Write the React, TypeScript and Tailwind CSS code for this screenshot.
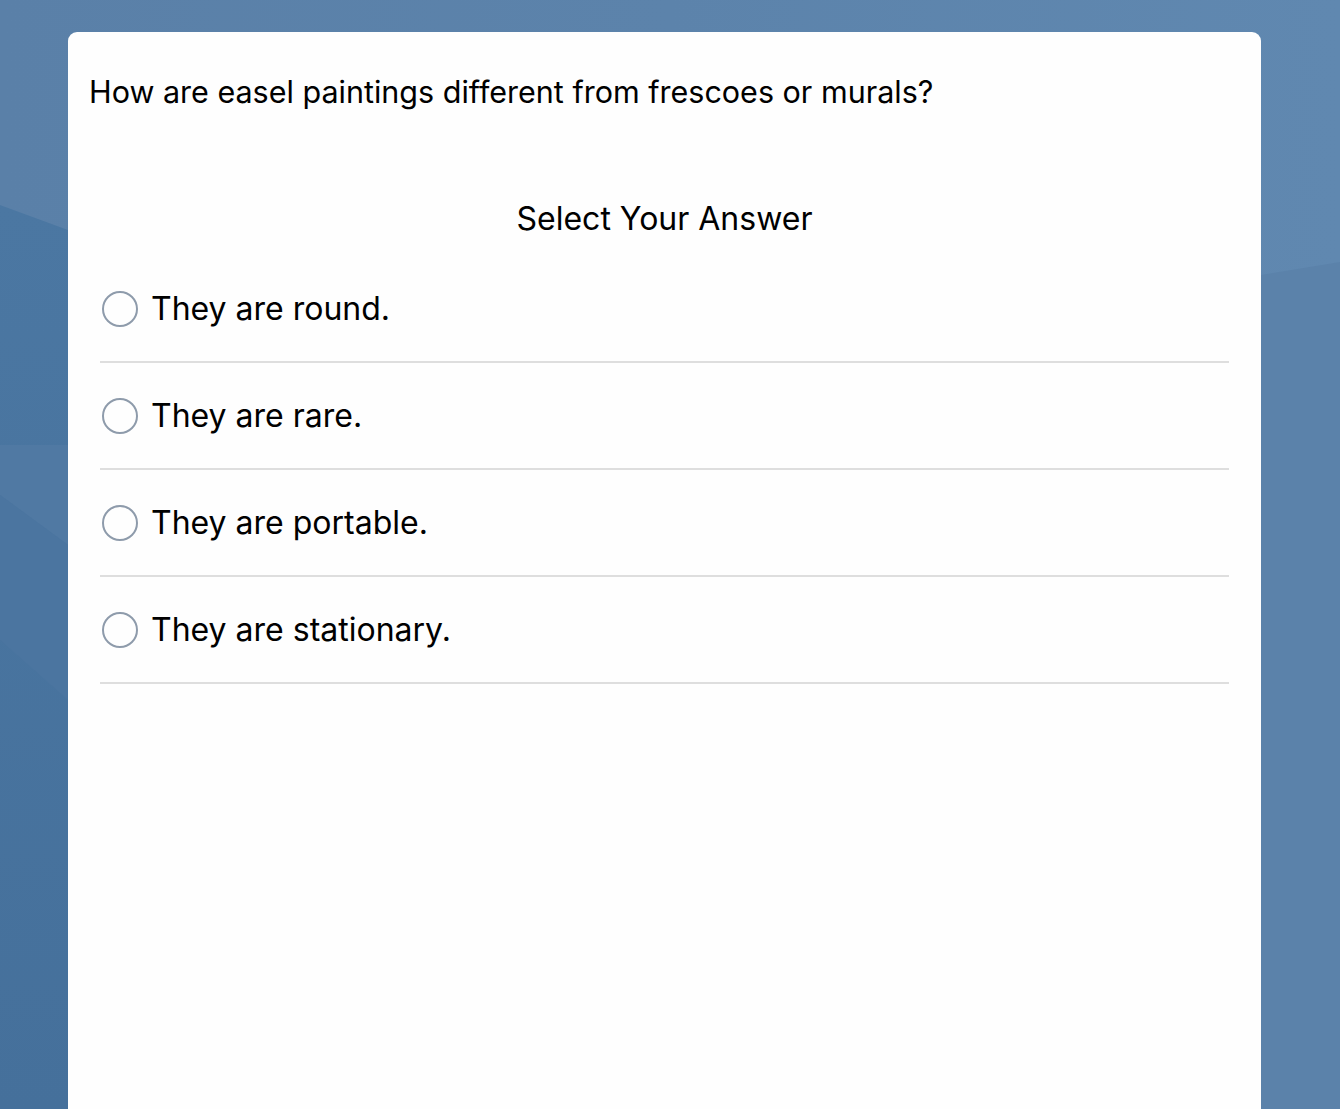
import React from "react";

const options = [
  "They are round.",
  "They are rare.",
  "They are portable.",
  "They are stationary.",
];

export default function App() {
  return (
    <div
      className="relative h-[1109px] w-full overflow-hidden bg-[linear-gradient(90deg,#5a80a8_0%,#5c83ab_50%,#6088b0_100%)]"
      style={{ fontFamily: "Inter, 'Noto Sans', sans-serif" }}
    >
      <svg className="absolute inset-0 h-full w-full" viewBox="0 0 1340 1109" preserveAspectRatio="none">
        <defs>
          <linearGradient id="lg" x1="0" y1="0" x2="0" y2="1">
            <stop offset="0" stopColor="#4b77a2" />
            <stop offset="1" stopColor="#45709b" />
          </linearGradient>
        </defs>
        <path d="M0 205 L68 230 L300 300 L300 1109 L0 1109 Z" fill="url(#lg)" />
        <path d="M0 445 L68 445 L68 545 L0 495 Z" fill="#5079a3" />
        <path d="M0 495 L68 545 L68 700 L0 640 Z" fill="#4b75a0" />
        <path d="M1200 280 L1261 275 L1340 262 L1340 1109 L1200 1109 Z" fill="#5b82aa" />
      </svg>
      <div className="relative pl-[68px] pt-[32px]">
        <div className="h-[1100px] w-[1193px] rounded-[9px] bg-[#fefefe]">
          <div className="pl-[21px] pt-[40px] text-[30.5px] leading-[40px] text-black">
            How are easel paintings different from frescoes or murals?
          </div>
          <div className="mt-[87px] text-center text-[32px] leading-[40px] text-black">
            Select Your Answer
          </div>
          <div className="mt-[17px] px-[32px]">
            {options.map((o) => (
              <div
                key={o}
                className="flex h-[107px] items-center border-b-2 border-[#dedede] pl-[2px]"
              >
                <div className="h-[36px] w-[36px] rounded-full border-2 border-[#8e9bab]" />
                <div className="ml-[13px] text-[32px] leading-[40px] text-black">{o}</div>
              </div>
            ))}
          </div>
        </div>
      </div>
    </div>
  );
}
